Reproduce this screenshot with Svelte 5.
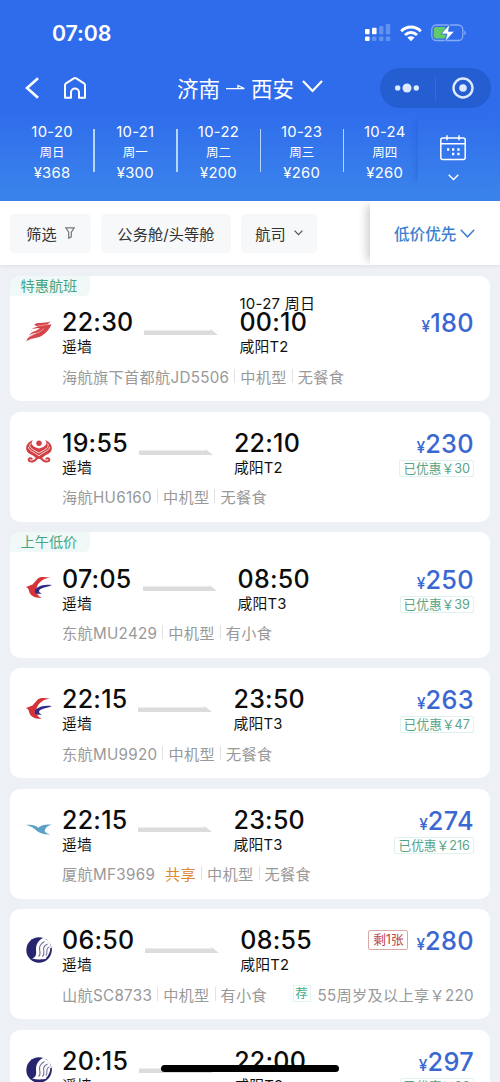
<script>
  const days = [
    { date: '10-20', week: '周日', price: '¥368' },
    { date: '10-21', week: '周一', price: '¥300' },
    { date: '10-22', week: '周二', price: '¥200' },
    { date: '10-23', week: '周三', price: '¥260' },
    { date: '10-24', week: '周四', price: '¥260' }
  ];
  const flights = [
    { tag: '特惠航班', logo: 'jd', dep: '22:30', arr: '00:10', day: '10-27 周日', to: '咸阳T2', no: '海航旗下首都航JD5506', info: ['中机型', '无餐食'], price: '180' },
    { logo: 'hu', dep: '19:55', arr: '22:10', to: '咸阳T2', no: '海航HU6160', info: ['中机型', '无餐食'], price: '230', off: '30' },
    { tag: '上午低价', logo: 'mu', dep: '07:05', arr: '08:50', to: '咸阳T3', no: '东航MU2429', info: ['中机型', '有小食'], price: '250', off: '39' },
    { logo: 'mu', dep: '22:15', arr: '23:50', to: '咸阳T3', no: '东航MU9920', info: ['中机型', '无餐食'], price: '263', off: '47' },
    { logo: 'mf', dep: '22:15', arr: '23:50', to: '咸阳T3', no: '厦航MF3969', share: true, info: ['中机型', '无餐食'], price: '274', off: '216' },
    { logo: 'sc', dep: '06:50', arr: '08:55', to: '咸阳T2', no: '山航SC8733', info: ['中机型', '有小食'], price: '280', left: '剩1张', rec: '55周岁及以上享￥220' },
    { logo: 'sc', dep: '20:15', arr: '22:00', to: '咸阳T2', no: '山航SC8731', info: ['中机型', '有小食'], price: '297', off: '33' }
  ];
</script>

<div class="screen">
  <header>
    <div class="status">
      <span class="clock">07:08</span>
      <div class="status-icons">
        <svg class="signal" width="26" height="18" viewBox="0 0 26 18" fill="#fff">
          <rect x="0" y="5" width="4.6" height="5.2" rx="1" /><rect x="7" y="3.8" width="4.6" height="6.4" rx="1" />
          <rect x="0" y="12.6" width="4.6" height="4.4" rx="1" />
          <g opacity=".25"><rect x="14" y="2" width="4.4" height="8.2" rx="1" /><rect x="20.8" y="0" width="4.4" height="10.2" rx="1" /><rect x="7" y="12.6" width="4.4" height="4.4" rx="1" /><rect x="14" y="12.6" width="4.4" height="4.4" rx="1" /><rect x="20.8" y="12.6" width="4.4" height="4.4" rx="1" /></g>
        </svg>
        <svg class="wifi" width="22" height="17" viewBox="0 0 22 17" fill="none" stroke="#fff" stroke-width="3">
          <path d="M1.2 6.2C6.8.6 15.2.6 20.8 6.2M5 10C8.5 6.700 13.5 6.700 17 10" />
          <path d="M7.400 12.500C9.500 10.800 12.500 10.800 14.600 12.500L11 16.200Z" fill="#fff" stroke="none" />
        </svg>
        <svg class="battery" width="36" height="20" viewBox="0 0 36 20">
          <rect x=".8" y="2" width="31" height="15.500" rx="4.500" fill="none" stroke="#86aaf5" stroke-width="1.300" />
          <rect x="2.800" y="4" width="12" height="11.500" rx="2" fill="#62cb69" />
          <path d="M33.300 7.500c2 .8 2 3.800 0 4.600z" fill="#86aaf5" />
          <path d="M18.800 1L10 11h6l-2.200 8L23.500 8.300h-6z" fill="#fff" stroke="#3470e5" stroke-width=".8" />
        </svg>
      </div>
    </div>

    <nav>
      <svg class="back" width="14" height="22" viewBox="0 0 14 22" fill="none" stroke="#fff" stroke-width="2.600"><path d="M13 1.200L2 11l11 9.800" /></svg>
      <svg class="home" width="24" height="24" viewBox="0 0 24 24" fill="none" stroke="#fff" stroke-width="2" stroke-linejoin="round"><path d="M2 9.200Q2 8 3 7.300L10.800 2.300Q12 1.600 13.200 2.300L21 7.300Q22 8 22 9.200v12.600h-6V16.500a4 4 0 0 0-8 0v5.300H2z" /></svg>
      <div class="route">
        <span>济南</span>
        <svg width="19" height="8" viewBox="0 0 19 8" fill="none" stroke="#fff" stroke-width="1.300"><path d="M0 4.700h18.300L12 1.500V4" /></svg>
        <span>西安</span>
        <svg class="down" width="21" height="13" viewBox="0 0 21 13" fill="none" stroke="#fff" stroke-width="2.200"><path d="M1 1l9.500 10L20 1" /></svg>
      </div>
      <div class="capsule">
        <svg width="24" height="10" viewBox="0 0 24 10" fill="#dce9ff"><circle cx="2.700" cy="5" r="2.700" /><circle cx="12" cy="5" r="4.500" /><circle cx="21.300" cy="5" r="2.700" /></svg>
        <i></i>
        <svg width="22" height="22" viewBox="0 0 22 22"><circle cx="11" cy="11" r="9.500" fill="none" stroke="#dce9ff" stroke-width="2.400" /><circle cx="11" cy="11" r="3.800" fill="#dce9ff" /></svg>
      </div>
    </nav>

    <div class="dates">
      {#each days as d}
        <div class="day"><b>{d.date}</b><span>{d.week}</span><b>{d.price}</b></div>
      {/each}
      <div class="calendar">
        <svg width="26" height="26" viewBox="0 0 26 26" fill="none" stroke="#fff" stroke-width="1.500">
          <rect x=".8" y="3" width="24.400" height="21.500" rx="2" /><path d="M1 8.800h24M7 .3v5M19 .3v5" />
          <path d="M7 14.500h2.300M12 14.500h2.300M17.300 14.500h2.300M12 19h2.300M17.300 19h2.300" stroke-width="2.300" />
        </svg>
        <svg class="chev" width="11" height="7" viewBox="0 0 11 7" fill="none" stroke="#fff" stroke-width="1.400"><path d="M.7.8l4.800 4.700L10.300.8" /></svg>
      </div>
    </div>
  </header>

  <div class="filters">
    <div class="chip c1"><span>筛选</span><svg width="10" height="12" viewBox="0 0 10 12" fill="none" stroke="#777" stroke-width="1.200"><path d="M.8.8h8.400L6.300 5.200v4.700L3.700 11.200v-6z" /></svg></div>
    <div class="chip c2"><span>公务舱/头等舱</span></div>
    <div class="chip c3"><span>航司</span><svg width="9" height="6" viewBox="0 0 9 6" fill="none" stroke="#555" stroke-width="1.300"><path d="M.6.6l3.900 4L8.400.6" /></svg></div>
    <div class="sort"><span>低价优先</span><svg width="15" height="9" viewBox="0 0 15 9" fill="none" stroke="#3c80d0" stroke-width="1.500"><path d="M.8.8l6.700 7L14.200.8" /></svg></div>
  </div>

  <main>
    {#each flights as f}
      <article class:tagged={f.tag}>
        {#if f.tag}<div class="tag">{f.tag}</div>{/if}
        <div class="logo">
          {#if f.logo === 'jd'}
            <svg viewBox="0 0 26 26"><path d="M8 6C11 2.500 17 5 24.500 2.500c-1.500 1.800-3 2.600-4 3.200 2 .1 3.500-.3 5-.2-2 4.500-5 8.500-10 11.500C9 20 5 18.500.3 22.500c1.200-5 6-6.500 10.700-9-3 .5-5 1-8 3C6 12 10.500 12 14 9.500c-3-.7-5 .3-8 .3 2-1.300 3.500-1.500 6-2.300C10.500 6.700 9.500 6.600 8 6z" fill="#d64449" /><path d="M3 18c5-3.500 11-4 15-8.500M12 6.500c3 .5 5-.3 8.500-.8" stroke="#f3b9b9" stroke-width=".7" fill="none" /></svg>
          {:else if f.logo === 'hu'}
            <svg viewBox="0 0 26 26"><path d="M7 1C-1 4-2 12 4 15c3 1.500 4 2 5 3.500h8c1-1.500 2-2 5-3.500 6-3 5-11-3-14 3.500 4 0 7-6 8.500C7 8 3.500 5 7 1z" fill="#d23f43" /><path d="M4.300 4.500C2 9 8 11 13 14c5-3 11-5 8.700-9.500M2.300 8c1 4.500 7 5 10.700 9 3.700-4 9.700-4.500 10.700-9" fill="none" stroke="#fff" stroke-width=".8" /><circle cx="13" cy="4.300" r="2.700" fill="#d23f43" /><path d="M11.500 17.500c-2 5.500-6.500 6-8.700 4-.8-2.500 2.700-3.300 3.200-1M14.500 17.500c2 5.500 6.500 6 8.700 4 .8-2.500-2.700-3.300-3.200-1M9 21c3-3 5-3 8 0" fill="none" stroke="#d23f43" stroke-width="2" /></svg>
          {:else if f.logo === 'mu'}
            <svg viewBox="0 0 26 26"><path d="M24 2.500C19 2 14.500 1.500 12 3.300L6.500 9.500 0 12c2 .8 2.600 2 3 3.500.8 4.800 5 7.500 12.500 7.500-3-1.500-5.200-4.500-5.200-7.500 0-1.800.4-3.600 1-4.800C13.500 6.300 18 3.500 24 2.500z" fill="#d5333a" /><path d="M26 10c-6-1-12 0-15.500 3-3.500 3.500-1.500 7 5.500 5.500-3.500-.8-4-3.300-1-4.700C18 12.300 22 12 26 10z" fill="#302b85" /></svg>
          {:else if f.logo === 'mf'}
            <svg viewBox="0 0 26 26"><path d="M0 9c5-.8 9 0 12.500 2.800C15 9 20 8.500 25.500 8.500 22 9.800 21 10.500 20 12c-1 2-1.700 2.500-1 3.800 1.500 1.700 3 2 5.500 2.600-5 .8-10-1-13.500-3.400C9 13.500 6 10 0 9z" fill="#5c9fc9" /></svg>
          {:else}
            <svg viewBox="0 0 26 26"><circle cx="13" cy="13" r="12.700" fill="#28256f" /><path d="M6 21.500C10 20.500 10.500 17 10 13.500 9.500 8 12 3.500 17.500.8 22 2.700 24.500 6 25 10c.7 5-1.500 9-4.500 11.500-4 1.200-10 1.200-14.500 0z" fill="#fff" /><path d="M12.500 19.500c3-2 1-5 1-8s1.500-5 5-7M16.300 19.500c3-2 1-5 1.300-8 .3-2.200 1.500-3.500 4-4.500M19.800 18.500c2-2 .7-4 1.200-6 .2-1.300 1-2.300 2.500-2.500" fill="none" stroke="#77769d" stroke-width="1.100" /><path d="M25 11c0 5-2 8-4.500 10.500" fill="none" stroke="#28256f" stroke-width="1.500" /></svg>
          {/if}
        </div>
        <div class="body">
          <div class="main-row">
            <div class="stop"><strong>{f.dep}</strong><span>遥墙</span></div>
            <svg class="line" width="74" height="6" viewBox="0 0 74 6"><path d="M0 1.500h66.500V0L74 6H0z" fill="#dcdcdc" /></svg>
            <div class="stop">
              {#if f.day}<em>{f.day}</em>{/if}
              <strong>{f.arr}</strong><span>{f.to}</span>
            </div>
            <div class="fare">
              <div class="amount">{#if f.left}<span class="left">{f.left}</span>{/if}<small>¥</small><strong>{f.price}</strong></div>
              {#if f.off}<div class="off">已优惠<span>￥</span>{f.off}</div>{/if}
            </div>
          </div>
          <div class="info">
            <span>{f.no}</span>
            {#if f.share}<span class="share">共享</span>{/if}
            {#each f.info as item}<i></i><span>{item}</span>{/each}
            {#if f.rec}<div class="rec"><b>荐</b><span>{f.rec}</span></div>{/if}
          </div>
        </div>
      </article>
    {/each}
  </main>
  <div class="home-bar"></div>
</div>

<style>
  :global(body) { margin: 0; background: #eceff3; }
  .screen { position: relative; width: 500px; height: 1082px; overflow: hidden; background: #edf0f4; font-family: Inter, "Noto Sans CJK SC", sans-serif; color: #111; }
  .screen * { box-sizing: border-box; }
  svg { display: block; flex: none; }
  span, b, strong, small, em { white-space: nowrap; font-style: normal; }
  header { height: 201px; background: linear-gradient(#2f6cec 0%, #2f6cec 55%, #3b84eb 100%); color: #fff; display: flex; flex-direction: column; }
  .status { height: 66px; display: flex; justify-content: space-between; padding: 0 33px 0 52px; align-items: center; }
  .clock { font-size: 21.300px; font-weight: 600; letter-spacing: -.1px; }
  .status-icons { display: flex; align-items: center; }
  .wifi { margin: 0 9px 0 9px; }
  nav { height: 46px; display: flex; align-items: center; padding: 0 9px 0 25px; margin-top: -1px; }
  .home { margin-left: 24px; }
  .route { display: flex; align-items: center; margin-left: 90px; font-size: 21.500px; width: 204px; }
  .route span { position: relative; top: -1px; }
  .route svg { margin: 0 6px; }
  .route .down { margin: -3px 0 0 8px; }
  .capsule { width: 111px; height: 40px; border-radius: 20px; background: #255ed0; display: flex; align-items: center; padding: 0 17px 0 15px; justify-content: space-between; }
  .capsule i { width: 1px; height: 25px; background: #346bd8; }
  .dates { display: flex; height: 90px; padding-left: 10.500px; align-items: flex-start; }
  .day { width: 83.200px; flex: none; display: flex; flex-direction: column; align-items: center; position: relative; padding-top: 11px; }
  .day:nth-child(5) { width: 75px; padding-left: 8px; }
  .day b { font-weight: 400; font-size: 14.800px; letter-spacing: .3px; line-height: 20px; height: 20px; }
  .day span { font-size: 12.500px; line-height: 21px; height: 20.800px; }
  .day:nth-child(-n+4)::after { content: ''; position: absolute; right: -1px; top: 18px; width: 1.500px; height: 43px; background: #b8d5fb; }
  .calendar { flex: 1; height: 65px; margin-top: 8px; display: flex; flex-direction: column; align-items: center; padding-top: 16px; box-shadow: -5px 0 6px -3px rgba(20, 65, 165, .22); padding-right: 12px; }
  .chev { margin-top: 13px; }
  .filters { height: 64px; background: #fff; display: flex; align-items: center; gap: 10px; padding-left: 10px; box-shadow: 0 1px 4px rgba(0,0,0,.07); font-size: 15.200px; color: #333; }
  .chip { height: 39px; background: #f7f8f9; border-radius: 4px; display: flex; align-items: center; justify-content: center; gap: 8px; flex: none; }
  .c1 { width: 81px; } .c2 { width: 130px; letter-spacing: .1px; } .c3 { width: 76px; }
  .sort { margin-left: 43px; height: 64px; flex: 1; display: flex; align-items: center; gap: 4px; padding-left: 24px; color: #3c80d0; font-weight: 500; font-size: 15.600px; box-shadow: -7px 0 9px -4px rgba(0,0,0,.2); clip-path: inset(0 0 0 -20px); }
  main { padding: 10.800px 10px 0; display: flex; flex-direction: column; gap: 10.300px; }
  article { height: 110.200px; flex: none; background: #fff; border-radius: 10px; display: flex; padding: 17px 16px 0 15.500px; position: relative; overflow: hidden; }
  article.tagged { height: 125.600px; padding-top: 32.400px; }
  .tag { position: absolute; left: 0; top: 0; width: 80px; height: 20px; line-height: 20px; padding-left: 10.500px; font-size: 14.200px; color: #45a581; background: #f0f9f7; white-space: nowrap; border-radius: 0 0 6px 0; }
  .logo { width: 26px; margin-right: 10.500px; padding-top: 10.500px; }
  .logo svg { width: 26px; height: 26px; }
  .body { flex: 1; min-width: 0; }
  .main-row { display: flex; height: 54px; }
  .stop { position: relative; display: flex; flex-direction: column; }
  .stop strong { font-weight: 450; font-size: 25px; letter-spacing: .25px; line-height: 28px; color: #0c0c0c; }
  .stop span { font-size: 14.800px; line-height: 23px; letter-spacing: .2px; }
  .stop em { position: absolute; left: 0; top: -13px; font-size: 15px; letter-spacing: .25px; line-height: 18px; }
  .line { margin: 20.500px 21px 0 11px; }
  .fare { margin-left: auto; display: flex; flex-direction: column; align-items: flex-end; }
  .amount { display: flex; align-items: baseline; color: #3a67d2; height: 30px; }
  .amount strong { font-weight: 450; font-size: 25.300px; letter-spacing: .35px; line-height: 30px; }
  .amount small { font-size: 15.500px; font-weight: 450; }
  .left { border: 1px solid #dba7a3; color: #bd453f; font-size: 12.700px; line-height: 17px; height: 20px; width: 40px; text-align: center; margin-right: 8px; border-radius: 2px; align-self: flex-start; margin-top: 4px; }
  .off { border: 1px solid #e0f2ed; color: #59a588; font-size: 12.700px; line-height: 15px; height: 17px; padding: 0 3px; border-radius: 2px; margin-top: 1px; white-space: nowrap; }
  .info { display: flex; align-items: center; height: 28px; color: #999; font-size: 15.200px; letter-spacing: .3px; margin-top: -.5px; }
  .info i { width: 1px; height: 14px; background: #e2e2e2; margin: 0 5px; }
  .share { color: #e0862f; margin-left: 10px; }
  .rec { margin-left: auto; display: flex; align-items: center; }
  .rec b { font-weight: 400; color: #3fad84; border: 1px solid #e2f4ee; font-size: 12.500px; width: 18px; height: 17px; line-height: 15px; text-align: center; margin-right: 7px; letter-spacing: 0; }
  .home-bar { position: absolute; left: 161px; top: 1065px; width: 178px; height: 6.500px; border-radius: 4px; background: #000; }
</style>
